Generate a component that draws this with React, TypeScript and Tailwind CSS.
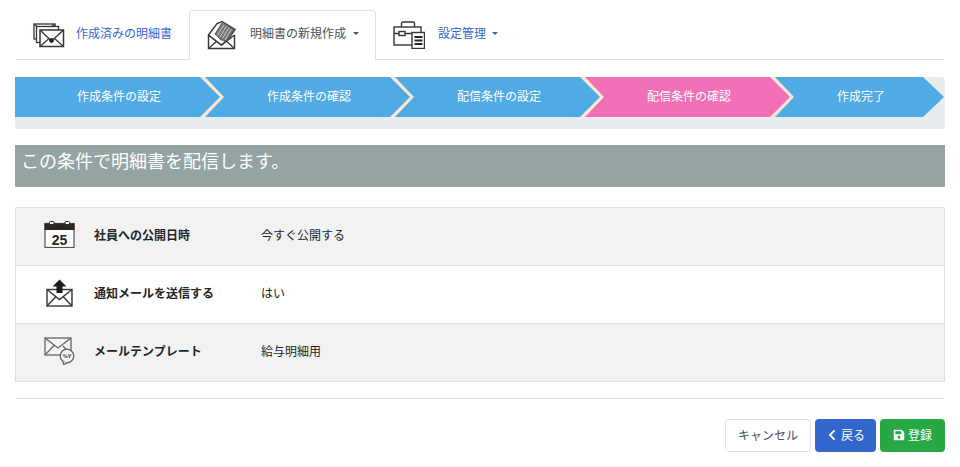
import { FaSave, FaChevronLeft } from "react-icons/fa";

const steps = [
  { label: "作成条件の設定", color: "bg-[#50aae4]", z: "z-[5]", last: false },
  { label: "作成条件の確認", color: "bg-[#50aae4]", z: "z-[4]", last: false },
  { label: "配信条件の設定", color: "bg-[#50aae4]", z: "z-[3]", last: false },
  { label: "配信条件の確認", color: "bg-[#f06fb5]", z: "z-[2]", last: false },
  { label: "作成完了", color: "bg-[#50aae4]", z: "z-[1]", last: true },
];

function EnvelopesIcon() {
  return (
    <svg width="32" height="26" viewBox="0 0 32 26" fill="#fff" stroke="#3a3432" strokeWidth="1.3">
      <rect x="1" y="2" width="21" height="15" />
      <path d="M1 2l10 8 11-8" fill="none" />
      <rect x="3.5" y="4.5" width="22" height="16" />
      <rect x="7" y="8" width="23.5" height="16.5" strokeWidth="1.5" />
      <path d="M7 8l11.5 11L30.5 8M7 24.5l9-8M30.5 24.5l-9-8" fill="none" />
      <circle cx="18.5" cy="18.5" r="2.4" fill="#2a2422" stroke="none" />
    </svg>
  );
}

function LetterIcon() {
  return (
    <svg width="30" height="30" viewBox="0 0 30 30" fill="none" stroke="#3a3432" strokeWidth="1.4">
      <path d="M1.5 15V28.5H27.5V15" />
      <path d="M1.5 28.5L11 20M27.5 28.5L18 20M1.5 15L14.5 25L27.5 15" />
      <path d="M1.5 15L10 3.5L15 1.5L28 9.5L22 18L14.5 25Z" fill="#fff" />
      <path d="M8 14L15 3L27 10L20 21L14 20Z" fill="#777" stroke="#444" strokeWidth="0.8" />
      <path d="M10.5 15.5L17 4.5M13 17L19.5 6M15.5 18.5L22 7.5M18 20L24.5 9" stroke="#ddd" strokeWidth="0.8" />
    </svg>
  );
}

function ToolboxIcon() {
  return (
    <svg width="32" height="28" viewBox="0 0 32 28" fill="none" stroke="#3a3432" strokeWidth="1.4">
      <path d="M8.5 6V2.5Q8.5 1 10 1H20Q21.5 1 21.5 2.5V6" />
      <rect x="1" y="6" width="27" height="18" fill="#fff" />
      <path d="M1 12.5H6M12 12.5H20" />
      <rect x="6" y="10.5" width="6" height="4" />
      <rect x="19" y="11.5" width="12.5" height="16" fill="#fff" />
      <path d="M21.5 16H29.5M21.5 19.5H29.5M21.5 23H29.5" stroke="#2a2422" strokeWidth="2" />
    </svg>
  );
}

function CalendarIcon() {
  return (
    <svg width="31" height="27" viewBox="0 0 31 27">
      <rect x="1" y="2.5" width="29" height="24" fill="#fff" stroke="#57504d" strokeWidth="1.2" />
      <rect x="0.5" y="2.5" width="30" height="6.5" fill="#2a2422" />
      <rect x="5.5" y="0.5" width="4.5" height="3" rx="1" fill="#fff" stroke="#2a2422" />
      <rect x="21" y="0.5" width="4.5" height="3" rx="1" fill="#fff" stroke="#2a2422" />
      <text x="15.5" y="23.5" textAnchor="middle" fontSize="14" fontWeight="700" fill="#2a2422" fontFamily="'Liberation Sans', sans-serif">25</text>
    </svg>
  );
}

function SendMailIcon() {
  return (
    <svg width="27" height="28" viewBox="0 0 27 28" fill="none" stroke="#3a3432" strokeWidth="1.4">
      <rect x="1" y="10.5" width="25" height="16.5" fill="#fff" />
      <path d="M1 10.5L13.5 20.5L26 10.5M1 27L10 17.5M26 27L17 17.5" />
      <path d="M13.5 0.5L20.5 7.5H16.5V14H10.5V7.5H6.5Z" fill="#1f1a18" stroke="none" />
    </svg>
  );
}

function TemplateMailIcon() {
  return (
    <svg width="31" height="28" viewBox="0 0 31 28" fill="none" stroke="#6b6461" strokeWidth="1.3">
      <rect x="1" y="1" width="26" height="17" fill="#f2f2f2" />
      <path d="M1 1L14 11L27 1M1 18L10 8.5M27 18L19 9" />
      <circle cx="23" cy="19" r="6.8" fill="#f2f2f2" />
      <path d="M19 24.5L19.5 27.5L23 25.8" fill="#f2f2f2" />
      <text x="23" y="21" textAnchor="middle" fontSize="5" fontWeight="700" fill="#444" stroke="none" fontFamily="'DejaVu Sans', sans-serif">%Y</text>
    </svg>
  );
}

const rows = [
  { icon: <CalendarIcon />, label: "社員への公開日時", value: "今すぐ公開する", bg: "bg-[#f2f2f2]" },
  { icon: <SendMailIcon />, label: "通知メールを送信する", value: "はい", bg: "bg-white" },
  { icon: <TemplateMailIcon />, label: "メールテンプレート", value: "給与明細用", bg: "bg-[#f2f2f2]" },
];

export default function App() {
  return (
    <div className="h-[467px] overflow-hidden bg-white px-[15px] pt-[10px] font-['Noto_Sans_CJK_JP','Noto_Sans',sans-serif] text-xs text-[#212529]">
      {/* Tabs */}
      <div className="flex h-[50px] border-b border-[#dee2e6]">
        <a className="flex h-[50px] w-[174px] items-center pl-[18px] text-[#3366cc]">
          <EnvelopesIcon />
          <span className="mb-1 ml-[11px]">作成済みの明細書</span>
        </a>
        <a className="flex h-[50px] w-[187px] items-center rounded-t border border-b-white border-[#dee2e6] bg-white pl-[17px] text-[#495057]">
          <LetterIcon />
          <span className="mb-1 ml-[13px]">明細書の新規作成</span>
          <span className="mb-[3px] ml-[7px] h-0 w-0 border-x-[3px] border-t-[3.5px] border-x-transparent border-t-[#495057]" />
        </a>
        <a className="flex h-[50px] items-center pl-[17px] text-[#3366cc]">
          <ToolboxIcon />
          <span className="mb-1 ml-[13px]">設定管理</span>
          <span className="mb-[3px] ml-[6px] h-0 w-0 border-x-[3px] border-t-[3.5px] border-x-transparent border-t-[#3366cc]" />
        </a>
      </div>

      {/* Steps */}
      <div className="mt-[17px] flex h-[52px] rounded bg-[#e9ecef]">
        {steps.map((s) => (
          <div key={s.label} className={`relative h-10 ${s.last ? "w-[170px]" : "w-[190px]"} ${s.z}`}>
            {!s.last && (
              <div className="absolute left-0 top-0 h-10 w-[209px] bg-[#f7e7d4] [clip-path:polygon(0_0,190px_0,209px_50%,190px_100%,0_100%)]" />
            )}
            <div
              className={`absolute left-0 top-0 flex h-10 items-center pb-[2px] pl-[62px] text-white ${s.color} ${
                s.last
                  ? "w-[169px] [clip-path:polygon(0_0,148px_0,169px_50%,148px_100%,0_100%)]"
                  : "w-[205px] [clip-path:polygon(0_0,185px_0,205px_50%,185px_100%,0_100%)]"
              }`}
            >
              {s.label}
            </div>
          </div>
        ))}
      </div>

      {/* Heading */}
      <div className="mt-4 h-[42px] bg-[#95a3a2] pl-[6px] pt-[2px] text-[18px] leading-[27px] text-white">
        この条件で明細書を配信します。
      </div>

      {/* Detail table */}
      <div className="mt-5 border border-[#dee2e6]">
        {rows.map((r, i) => (
          <div
            key={r.label}
            className={`flex items-center pb-1 ${r.bg} ${i > 0 ? "h-[58px] border-t border-[#dee2e6]" : "h-[57px]"}`}
          >
            <div className="flex w-[78px] justify-center pl-2">{r.icon}</div>
            <div className="w-[167px] font-bold">{r.label}</div>
            <div>{r.value}</div>
          </div>
        ))}
      </div>

      <div className="mt-4 border-t border-[#dee2e6]" />

      {/* Actions */}
      <div className="mt-5 flex justify-end gap-1">
        <button className="h-[33px] w-[86px] rounded border border-[#dee2e6] bg-white pb-[2px] text-[#495057]">キャンセル</button>
        <button className="flex h-[33px] w-[61px] items-center justify-center gap-[3px] rounded bg-[#3366cc] pb-[2px] text-white">
          <FaChevronLeft className="h-3 w-3" />
          戻る
        </button>
        <button className="flex h-[33px] w-[65px] items-center justify-center gap-[3px] rounded bg-[#28a745] pb-[2px] text-white">
          <FaSave className="h-3 w-3" />
          登録
        </button>
      </div>
    </div>
  );
}
